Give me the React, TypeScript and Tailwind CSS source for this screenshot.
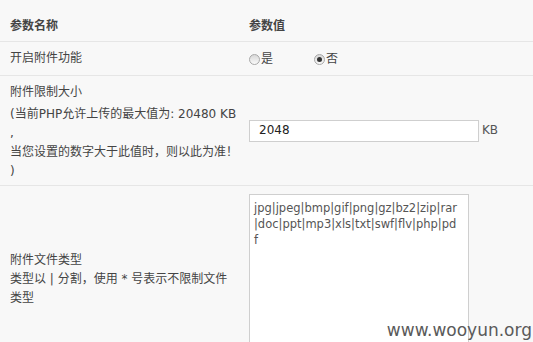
const font = { fontFamily: '"DejaVu Sans", "Noto Sans CJK SC", sans-serif' };

function Radio({ checked, label }: { checked?: boolean; label: string }) {
  return (
    <label className="flex items-center">
      <span className="relative w-[11px] h-[11px] rounded-full border border-[#a8a8a8] bg-gradient-to-b from-[#d8d8d8] to-[#fafafa] flex items-center justify-center">
        {checked && <span className="w-[5px] h-[5px] rounded-full bg-[#333]" />}
      </span>
      <span className="ml-[1px]">{label}</span>
    </label>
  );
}

export default function App() {
  return (
    <div
      className="relative w-[533px] h-[342px] overflow-hidden bg-[#f8f8f8] text-[12px] leading-[19px] text-[#444]"
      style={font}
    >
      <div className="flex h-[42px] pt-[17px] font-bold border-b border-[#e6e6e6]">
        <div className="w-[249px] pl-[10px]">参数名称</div>
        <div>参数值</div>
      </div>

      <div className="flex h-[34px] items-center border-b border-[#e6e6e6]">
        <div className="w-[249px] pl-[10px]">开启附件功能</div>
        <div className="flex items-center gap-[41px] pt-[1px]">
          <Radio label="是" />
          <Radio checked label="否" />
        </div>
      </div>

      <div className="flex h-[110px] items-center border-b border-[#e6e6e6]">
        <div className="w-[249px] pl-[10px] pt-[2px]">
          <div className="mb-[3px]">附件限制大小</div>
          <div>(当前PHP允许上传的最大值为: 20480 KB</div>
          <div>,</div>
          <div>当您设置的数字大于此值时，则以此为准！</div>
          <div>)</div>
        </div>
        <div className="flex items-center">
          <div className="w-[230px] h-[22px] bg-white border border-[#cfcfcf] pl-[9px] flex items-center text-[#222]">
            2048
          </div>
          <span className="ml-[3px] text-[#555]">KB</span>
        </div>
      </div>

      <div className="flex h-[184px] items-center">
        <div className="w-[249px] pl-[10px] pt-[2px]">
          <div>附件文件类型</div>
          <div>类型以 | 分割，使用 * 号表示不限制文件</div>
          <div>类型</div>
        </div>
        <div className="self-start mt-[8px] w-[220px] h-[170px] bg-white border border-[#cfcfcf] px-[4px] py-[5px] text-[11.5px] text-[#555] leading-[16px] whitespace-pre">
          <div>jpg|jpeg|bmp|gif|png|gz|bz2|zip|rar</div>
          <div>|doc|ppt|mp3|xls|txt|swf|flv|php|pd</div>
          <div>f</div>
        </div>
      </div>

      <div className="absolute right-[1px] bottom-[2px] text-[17px] leading-[20px] text-[#5a5a5a]">
        www.wooyun.org
      </div>
    </div>
  );
}
